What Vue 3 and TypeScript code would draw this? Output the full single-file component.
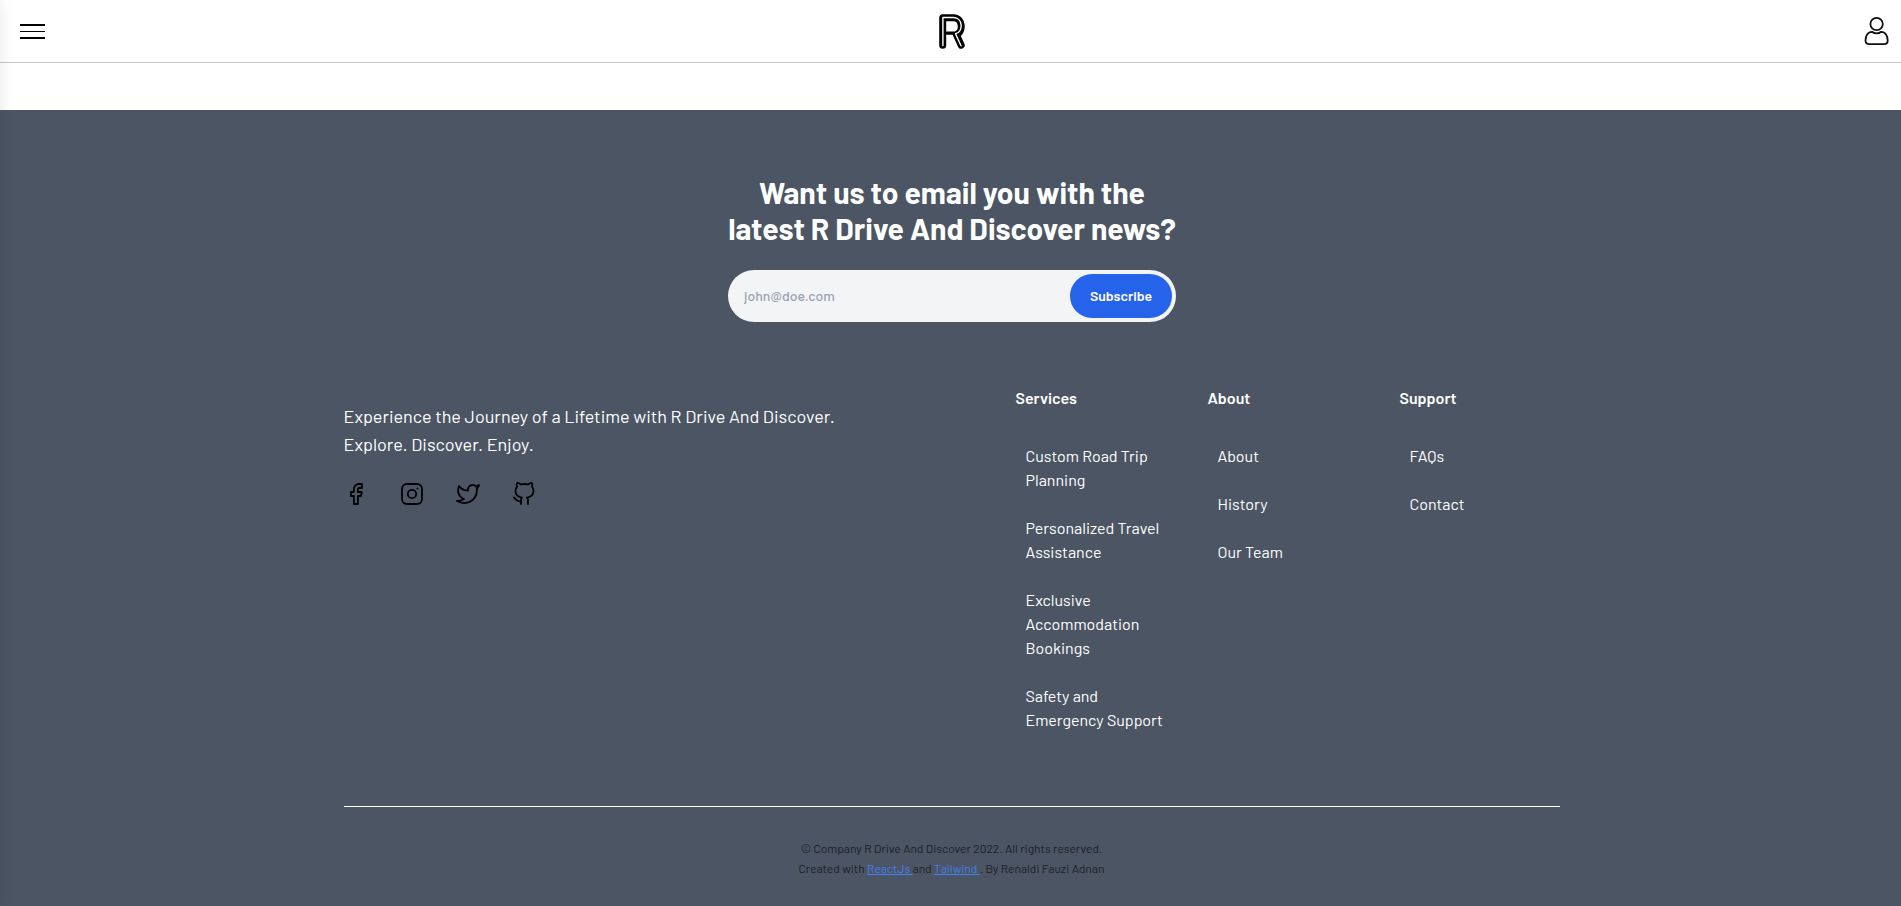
<script setup lang="ts">
interface Column {
  title: string
  links: string[][]
}

const columns: Column[] = [
  {
    title: 'Services',
    links: [
      ['Custom Road Trip', 'Planning'],
      ['Personalized Travel', 'Assistance'],
      ['Exclusive', 'Accommodation', 'Bookings'],
      ['Safety and', 'Emergency Support'],
    ],
  },
  { title: 'About', links: [['About'], ['History'], ['Our Team']] },
  { title: 'Support', links: [['FAQs'], ['Contact']] },
]
</script>

<template>
  <div class="page">
    <div class="edge-shadow"></div>
    <header class="topbar">
      <button class="menu" aria-label="Menu">
        <span class="bar thick"></span>
        <span class="bar thin"></span>
        <span class="bar thick"></span>
      </button>
      <svg class="logo" viewBox="0 0 26 35" fill="none" stroke-linecap="round" stroke-linejoin="round">
        <path d="M3.700 31.200V3.700H14.500C24.300 3.700 24.300 18.500 17.300 20.500L22.200 31.200" stroke="#000" stroke-width="7" />
        <path d="M7.500 19.200H15" stroke="#000" stroke-width="3.200" />
        <path d="M3.900 31.500V3.500H14.500C24.400 3.500 24.400 18.600 16.500 19.800L22 31.800" stroke="#fff" stroke-width="1.400" />
      </svg>
      <svg class="user" viewBox="0 0 26 30" fill="none" stroke="#111" stroke-width="1.800">
        <circle cx="12.600" cy="8" r="6.200" />
        <path d="M8 15.800C10.600 18 14.600 18 17.200 15.800C21.500 15.800 23.700 20 23.700 24.500C23.700 27 22.200 28.200 20 28.200H5.200C3 28.200 1.500 27 1.500 24.500C1.500 20 3.700 15.800 8 15.800Z" stroke-linejoin="round" />
      </svg>
    </header>

    <footer class="footer">
      <section class="newsletter">
        <h2><span>Want us to email you with the</span><span>latest R Drive And Discover news?</span></h2>
        <form class="subscribe" @submit.prevent>
          <input type="email" placeholder="john@doe.com" />
          <button type="submit">Subscribe</button>
        </form>
      </section>

      <section class="main">
        <div class="intro">
          <p><span>Experience the Journey of a Lifetime with R Drive And Discover.</span><span>Explore. Discover. Enjoy.</span></p>
          <div class="social">
            <svg viewBox="0 0 24 24"><path d="M17.900 2h-3a5 5 0 0 0-5 5v3h-3v4h3v8h4v-8h3l1-4h-4V7a1 1 0 0 1 1-1h3z" /></svg>
            <svg viewBox="0 0 24 24"><rect x="2" y="2" width="20" height="20" rx="5" /><circle cx="12" cy="12" r="4.200" /><path d="M17.500 6.500h.01" /></svg>
            <svg viewBox="0 0 24 24"><path d="M23 3a10.900 10.900 0 0 1-3.140 1.530 4.480 4.480 0 0 0-7.860 3v1A10.660 10.660 0 0 1 3 4s-4 9 5 13a11.640 11.640 0 0 1-7 2c9 5 20 0 20-11.500a4.500 4.500 0 0 0-.08-.83A7.720 7.720 0 0 0 23 3z" /></svg>
            <svg viewBox="0 0 24 24"><path d="M16 22v-3.870a3.370 3.370 0 0 0-.94-2.610c3.140-.35 6.440-1.540 6.440-7A5.440 5.440 0 0 0 20 4.770 5.070 5.070 0 0 0 19.910 1S18.730.65 16 2.480a13.380 13.380 0 0 0-7 0C6.270.65 5.090 1 5.090 1A5.070 5.070 0 0 0 5 4.770a5.440 5.440 0 0 0-1.500 3.780c0 5.420 3.300 6.610 6.440 7A3.370 3.370 0 0 0 9 18.130V22M9 19.500c-3.500 0-5-1.500-7-4" /></svg>
          </div>
        </div>
        <nav class="columns">
          <div v-for="c in columns" :key="c.title">
            <h3>{{ c.title }}</h3>
            <ul>
              <li v-for="l in c.links" :key="l[0]"><a><span v-for="t in l" :key="t">{{ t }}</span></a></li>
            </ul>
          </div>
        </nav>
      </section>

      <section class="legal">
        <p>© Company R Drive And Discover 2022. All rights reserved.</p>
        <p>Created with <a>ReactJs&nbsp;</a>and <a>Tailwind&nbsp;</a>. By Renaldi Fauzi Adnan</p>
      </section>
    </footer>
  </div>
</template>

<style>
html, body { margin: 0; background: #fff; overflow: hidden; }
</style>

<style scoped>
* { box-sizing: border-box; }
h2, h3, p, ul { margin: 0; padding: 0; }
.page { position: relative; height: 906px; overflow: hidden; font-family: Barlow, Roboto, sans-serif; }
.edge-shadow { position: absolute; z-index: 2; left: -20px; top: 0; width: 20px; height: 100%; box-shadow: 0 0 16px rgba(0, 0, 0, .1); }
.topbar { height: 63px; border-bottom: 1px solid #c9c9c9; display: grid; grid-template-columns: 1fr 26px 1fr; align-items: center; padding: 0 11px 0 20px; }
.menu { width: 25px; height: 15px; border: 0; padding: 0; background: none; display: flex; flex-direction: column; justify-content: space-between; }
.bar { width: 25px; background: #000; }
.thick { height: 2px; }
.thin { height: 1px; }
.logo { width: 26px; height: 35px; margin-left: -3px; }
.user { width: 26px; height: 30px; justify-self: end; }
.footer { margin-top: 47px; height: 796px; background: #4b5563; padding-top: 64px; color: #fff; }
.newsletter { width: 448px; margin-left: 728px; }
h2 { font-size: 30px; line-height: 36px; font-weight: 700; display: flex; flex-direction: column; align-items: center; white-space: nowrap; }
.subscribe { margin-top: 24px; height: 52px; border-radius: 26px; background: #f3f4f6; padding: 4px; display: flex; }
.subscribe input { flex: 1; min-width: 0; height: 43px; border: 0; background: none; outline: 0; padding: 0 12px; font: 500 14px/20px Barlow, Roboto, sans-serif; }
.subscribe input::placeholder { color: #9ca3af; opacity: 1; }
.subscribe button { width: 102px; height: 44px; border: 0; border-radius: 22px; background: #2563eb; color: #fff; font: 600 14px/20px Barlow, Roboto, sans-serif; padding: 0 0 1px; }
.main { width: 1216px; height: 421px; margin: 64px 0 0 343.500px; display: grid; grid-template-columns: 544px 544px; column-gap: 128px; border-bottom: 1px solid #fff; }
.intro { padding-top: 16px; }
.intro p { font-size: 18px; line-height: 28px; white-space: nowrap; display: flex; flex-direction: column; align-items: flex-start; }
.social { display: flex; gap: 32px; margin-top: 24px; padding-left: .5px; }
.social svg { width: 24px; height: 24px; fill: none; stroke: #000; stroke-width: 1.800; stroke-linecap: round; stroke-linejoin: round; }
.columns { display: grid; grid-template-columns: repeat(3, 160px); column-gap: 32px; }
h3 { font-size: 16px; line-height: 24px; font-weight: 600; }
ul { list-style: none; padding: 34px 0 0 10px; display: flex; flex-direction: column; gap: 24px; }
li a { display: flex; flex-direction: column; align-items: flex-start; font-size: 16px; line-height: 24px; white-space: nowrap; }
.legal { margin: 31px 0 0 2px; text-align: center; font-size: 12px; line-height: 20px; color: #1c1f26; }
.legal a { color: #4380f0; text-decoration: underline; }
</style>
